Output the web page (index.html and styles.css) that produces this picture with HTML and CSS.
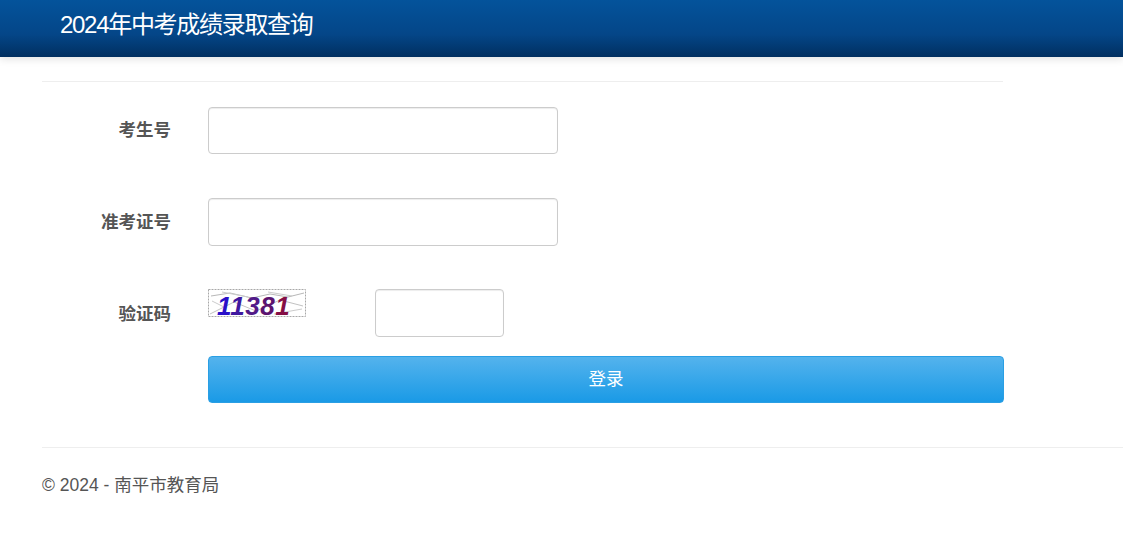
FILE: index.html

```html
<!DOCTYPE html>
<html lang="zh-CN">
<head>
  <meta charset="UTF-8" />
  <meta name="viewport" content="width=device-width, initial-scale=1.0" />
  <title>2024年中考成绩录取查询</title>
  <link rel="stylesheet" href="styles.css">
</head>
<body>

  <header class="topbar">
    <div class="brand">2024年中考成绩录取查询</div>
  </header>

  <main class="content">
    <hr class="rule rule-form">

    <form class="login-form">
      <div class="row row-first">
        <label class="row-label">考生号</label>
        <input class="field field-wide" type="text">
      </div>

      <div class="row row-second">
        <label class="row-label">准考证号</label>
        <input class="field field-wide field-tall" type="text">
      </div>

      <div class="row row-code">
        <label class="row-label label-code">验证码</label>
        <div class="code-group">
          <svg class="captcha" width="98" height="28" viewBox="0 0 98 28">
            <rect x="0.5" y="0.5" width="97" height="27" fill="#fff" stroke="#a8a8a8" stroke-dasharray="2 1" />
            <path d="M3 7 L22 4 L44 9 L62 5 L80 8 L96 4" fill="none" stroke="#b8b8b8" />
            <path d="M2 25 L26 13 L48 22 L72 11 L95 17" fill="none" stroke="#c2c2c2" />
            <path d="M14 3 L40 8 M60 3 L84 7 M66 25 L94 20 M4 12 L18 19" fill="none" stroke="#cccccc" />
            <text class="captcha-text" x="9" y="26"><tspan fill="#2a10c8">1</tspan><tspan fill="#3f189f">1</tspan><tspan fill="#521a88">3</tspan><tspan fill="#5c1470">8</tspan><tspan fill="#850f45">1</tspan></text>
          </svg>
          <input class="field field-code" type="text">
        </div>
      </div>

      <div class="row row-submit">
        <span class="row-label"></span>
        <button class="submit-btn" type="button">登录</button>
      </div>
    </form>

    <hr class="rule rule-footer">

    <footer class="footer">© 2024 - 南平市教育局</footer>
  </main>

</body>
</html>
```

FILE: styles.css

```css
* { box-sizing: border-box; margin: 0; padding: 0; }
body {
  background: #fff;
  font-family: "Liberation Sans", "Noto Sans CJK SC", sans-serif;
  font-size: 17.5px;
  color: #555;
}
.topbar {
  height: 57px;
  background: linear-gradient(to bottom, #04539b 0%, #044688 60%, #012f60 100%);
  box-shadow: 0 2px 8px rgba(0, 0, 0, 0.12);
  padding: 10px 0 0 60px;
}
.brand {
  font-size: 24px;
  line-height: 30px;
  letter-spacing: -1.3px;
  color: #fff;
}
.content {
  padding: 24px 0 0 42px;
}
.rule {
  border: none;
  border-top: 1px solid #eee;
}
.rule-form {
  width: 961px;
}
.rule-footer {
  margin-top: 44px;
}
.login-form {
  width: 962px;
  padding-top: 25px;
}
.row {
  display: flex;
  align-items: center;
}
.row-second {
  margin-top: 44px;
}
.row-code {
  margin-top: 43px;
  align-items: flex-start;
}
.row-submit {
  margin-top: 19px;
}
.row-label {
  flex: 0 0 129px;
  padding-bottom: 4px;
  text-align: right;
  font-weight: bold;
  color: #555;
}
.label-code {
  padding: 11px 0 0;
}
.field {
  display: block;
  height: 47px;
  margin-left: 37px;
  background: #fff;
  border: 1px solid #ccc;
  border-radius: 4px;
  box-shadow: inset 0 1px 1px rgba(0, 0, 0, 0.075);
}
.field-wide {
  width: 350px;
}
.field-tall {
  height: 48px;
}
.code-group {
  display: flex;
  margin-left: 37px;
}
.captcha {
  display: block;
  overflow: visible;
}
.captcha-text {
  font-family: "Liberation Sans", sans-serif;
  font-size: 26px;
  font-style: italic;
  font-weight: bold;
  letter-spacing: 0.6px;
}
.field-code {
  width: 129px;
  height: 48px;
  margin-left: 69px;
}
.submit-btn {
  flex: 1;
  height: 47px;
  margin-left: 37px;
  padding-bottom: 4px;
  background: linear-gradient(to bottom, #54b3ed, #1a9ae6);
  border: 1px solid #2a9fe4;
  border-radius: 4px;
  font-family: inherit;
  font-size: 17.5px;
  color: #fff;
}
.footer {
  padding-top: 27px;
  line-height: 20px;
  color: #555;
}
```
